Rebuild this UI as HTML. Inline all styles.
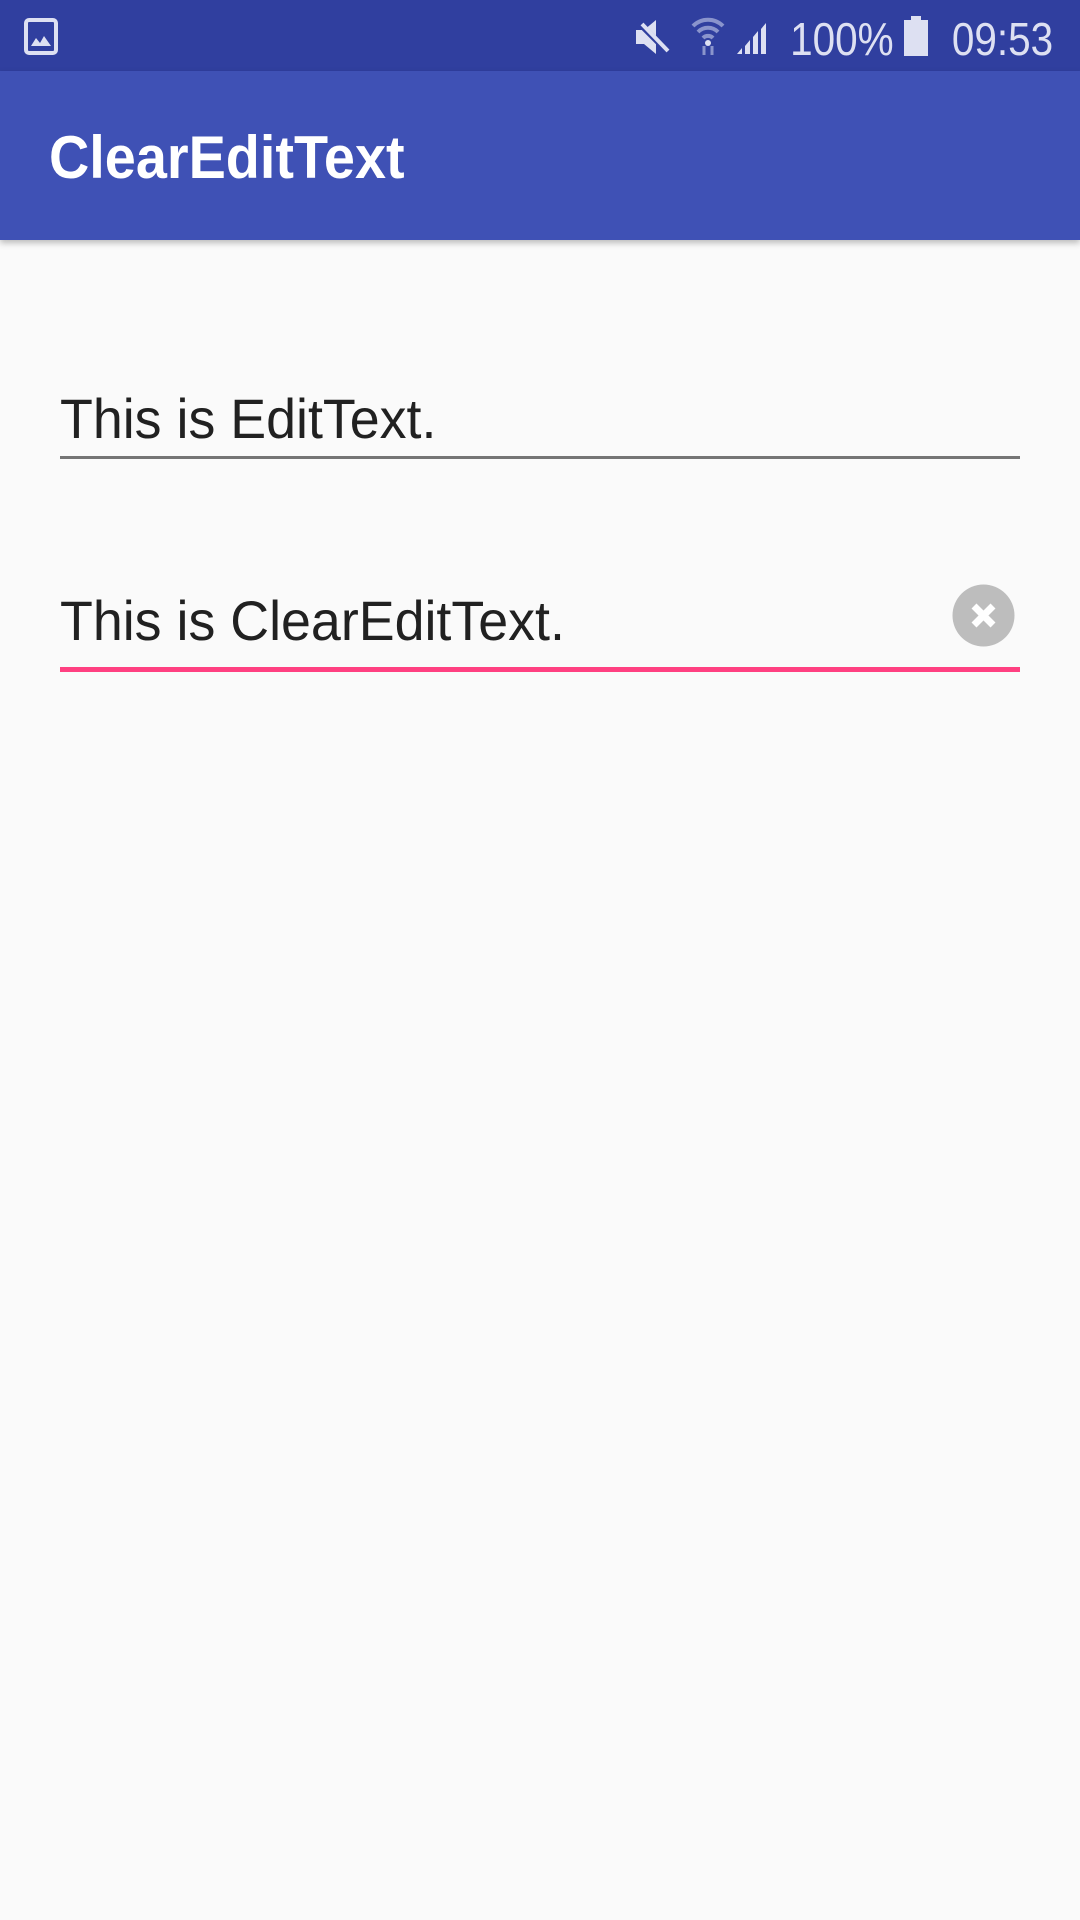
<!DOCTYPE html>
<html><head><meta charset="utf-8"><style>
*{margin:0;padding:0;box-sizing:border-box}
html,body{width:1080px;height:1920px;background:#fafafa;overflow:hidden;font-family:"Liberation Sans",sans-serif}
.sb{position:absolute;left:0;top:0;width:1080px;height:71px;background:#303f9f;color:#dde0f2}
.ab{position:absolute;left:0;top:71px;width:1080px;height:169px;background:#3f51b5;box-shadow:0 3px 6px rgba(0,0,0,.25)}
.title{position:absolute;left:49px;top:52px;font-size:60px;font-weight:bold;color:#fff;transform:scaleX(.93);transform-origin:left center;white-space:nowrap}
.t{position:absolute;left:60px;font-size:56px;color:#212121;white-space:nowrap;transform:scaleX(.96);transform-origin:left center}
.line{position:absolute;left:60px;width:960px}
.stxt{position:absolute;top:12px;font-size:46px;white-space:nowrap;transform:scaleX(.88);transform-origin:right center}
</style></head><body>
<div class="sb">
<svg style="position:absolute;left:24px;top:18px" width="34" height="37" viewBox="0 0 34 37"><rect x="2" y="2" width="30" height="33" rx="3" fill="none" stroke="#dde0f2" stroke-width="4"/><path d="M7 28 L12 20 L16 25 L20 18 L27 28Z" fill="#dde0f2"/></svg>
<svg style="position:absolute;left:634px;top:18px" width="38" height="38" viewBox="0 0 38 38"><path d="M2 12h8l12-10v34L10 26H2z" fill="#dde0f2"/><path d="M4 4L34 34" stroke="#303f9f" stroke-width="6"/><path d="M8 6L34 33" stroke="#dde0f2" stroke-width="4"/></svg>
<svg style="position:absolute;left:690px;top:16px" width="36" height="40" viewBox="0 0 36 40"><path d="M3 10a21 21 0 0 1 30 0M8 16a14 14 0 0 1 20 0M13 22a7 7 0 0 1 10 0" fill="none" stroke="#8a94cc" stroke-width="4"/><circle cx="18" cy="27" r="3" fill="#dde0f2"/><path d="M14 30v9M22 30v9" stroke="#8a94cc" stroke-width="3"/></svg>
<svg style="position:absolute;left:735px;top:18px" width="40" height="38" viewBox="0 0 40 38"><path d="M2 36h5v-6zM10 36h5V22l-5 6zM18 36h5V13l-5 6zM26 36h5V5l-5 6z" fill="#dde0f2"/></svg>
<div class="stxt" style="right:186px">100%</div>
<svg style="position:absolute;left:904px;top:16px" width="24" height="40" viewBox="0 0 24 40"><rect x="7" y="0" width="10" height="5" fill="#dde0f2"/><rect x="0" y="4" width="24" height="36" fill="#dde0f2"/></svg>
<div class="stxt" style="right:27px">09:53</div>
</div>
<div class="ab"><div class="title">ClearEditText</div></div>
<div class="t" style="top:386px">This is EditText.</div>
<div class="line" style="top:456px;height:3px;background:#757575"></div>
<div class="t" style="top:588px">This is ClearEditText.</div>
<svg style="position:absolute;left:952px;top:584px" width="63" height="63" viewBox="0 0 63 63"><circle cx="31.5" cy="31.5" r="31" fill="#bdbdbd"/><path d="M22 22L41 41M41 22L22 41" stroke="#fff" stroke-width="7"/></svg>
<div class="line" style="top:667px;height:5px;background:#ff4081"></div>
</body></html>
